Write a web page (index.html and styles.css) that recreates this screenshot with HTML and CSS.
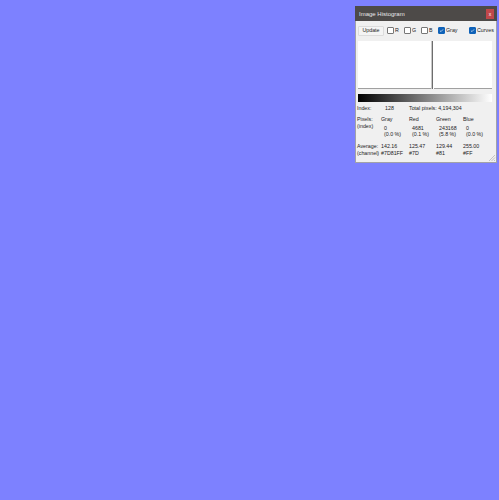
FILE: index.html

```html
<!DOCTYPE html>
<html>
<head>
    <meta charset="UTF-8">
    <title>Image Histogram</title>
    <link rel="stylesheet" href="styles.css">
</head>
<body>

    <div class="window">

        <div class="titlebar">
            <span class="title">Image Histogram</span>
            <span class="close">x</span>
        </div>

        <div class="toolbar">
            <button class="update">Update</button>
            <label class="check"><span class="box"></span>R</label>
            <label class="check"><span class="box"></span>G</label>
            <label class="check"><span class="box"></span>B</label>
            <label class="check"><span class="box on"><svg viewBox="0 0 8 8"><path d="M1.5 4.2 3.2 5.8 6.5 2.2" fill="none" stroke="#fff" stroke-width="1"/></svg></span>Gray</label>
            <label class="check curves"><span class="box on"><svg viewBox="0 0 8 8"><path d="M1.5 4.2 3.2 5.8 6.5 2.2" fill="none" stroke="#fff" stroke-width="1"/></svg></span>Curves</label>
        </div>

        <div class="plot">
            <div class="baseline left"></div>
            <div class="peak"></div>
            <div class="baseline right"></div>
        </div>

        <div class="gradient"></div>

        <div class="index-row">
            <span class="index-label">Index:</span>
            <span class="index-value">128</span>
            <span>Total pixels: 4,194,304</span>
        </div>

        <div class="stats pixels">
            <div class="head">Pixels:<br>(index)</div>
            <div>Gray<div class="val">0</div><div class="pct">(0.0 %)</div></div>
            <div>Red<div class="val">4681</div><div class="pct">(0.1 %)</div></div>
            <div>Green<div class="val">243168</div><div class="pct">(5.8 %)</div></div>
            <div>Blue<div class="val">0</div><div class="pct">(0.0 %)</div></div>
        </div>

        <div class="stats average">
            <div class="head">Average:<br>(channel)</div>
            <div>142.16<br>#7D81FF</div>
            <div>125.47<br>#7D</div>
            <div>129.44<br>#81</div>
            <div>255.00<br>#FF</div>
        </div>

        <svg class="grip" viewBox="0 0 8 8"><path d="M7 1 1 7M7 3.5 3.5 7M7 6 6 7" stroke="#c4c4c4" stroke-width="1" fill="none"/></svg>

    </div>

</body>
</html>
```

FILE: styles.css

```css
html {
    box-sizing: border-box;
}

*,
*:before,
*:after {
    box-sizing: inherit;
}

body {
    margin: 0;
    height: 500px;
    overflow: hidden;
    background: #7d81ff;
    font-family: "Liberation Sans", Arial, sans-serif;
    font-size: 5.3px;
    line-height: 7px;
    color: #222;
}

.window {
    position: absolute;
    left: 355px;
    top: 6px;
    width: 142px;
    height: 157px;
    background: #f0f0f0;
    border: 1px solid #a2a2a8;
    border-top: 0;
}

.titlebar {
    display: flex;
    align-items: flex-start;
    justify-content: space-between;
    height: 15px;
    margin: 0 -1px;
    padding-left: 4px;
    background: #4d4a48;
    color: #e8e8e8;
    font-size: 6px;
    line-height: 16px;
}

.close {
    width: 8px;
    height: 10px;
    margin: 3px 3px 0 0;
    background: #c0474a;
    color: #fff;
    font-size: 5px;
    line-height: 10px;
    text-align: center;
}

.toolbar {
    display: flex;
    align-items: center;
    height: 20px;
    padding: 0 0 1px 2px;
}

.update {
    flex: none;
    width: 26px;
    height: 10px;
    margin: 0 3px 0 0;
    padding: 0;
    background: #f4f4f4;
    border: 1px solid #dcdcdc;
    border-radius: 1px;
    font: inherit;
    color: #222;
}

.check {
    display: flex;
    flex: none;
    align-items: center;
    gap: 1px;
    width: 17px;
}

.box {
    display: block;
    flex: none;
    width: 7px;
    height: 7px;
    background: #fff;
    border: 1px solid #777;
    border-radius: 1px;
}

.box.on {
    background: #0f62b8;
    border-color: #0f62b8;
}

.box svg {
    display: block;
    width: 100%;
    height: 100%;
}

.check.curves {
    margin-left: 14px;
    width: auto;
}

.plot {
    position: relative;
    height: 48px;
    margin: 0 4px 0 2px;
    background: #fff;
}

.baseline {
    position: absolute;
    bottom: 0;
    height: 1px;
    background: #a0a0a0;
}

.baseline.left {
    left: 0;
    width: 73px;
}

.baseline.right {
    left: 76px;
    right: 0;
}

.peak {
    position: absolute;
    left: 74px;
    top: 0;
    bottom: 0;
    width: 1px;
    background: #6d6d6d;
    box-shadow: -1px 0 0 #c8c8c8;
}

.gradient {
    height: 8px;
    margin: 5px 4px 0 2px;
    background: linear-gradient(to right, #000, #fff);
}

.index-row {
    display: flex;
    margin: 3px 0 0 1px;
}

.index-label {
    width: 28px;
}

.index-value {
    width: 24px;
}

.stats {
    display: grid;
    grid-template-columns: 24px 28px 27px 27px 27px;
    margin-left: 1px;
}

.pixels {
    margin-top: 4px;
}

.average {
    margin-top: 5px;
}

.val {
    padding-left: 3px;
    margin-top: 2px;
    line-height: 6px;
}

.pct {
    padding-left: 3px;
    line-height: 7px;
}

.grip {
    position: absolute;
    right: 0;
    bottom: 0;
    width: 8px;
    height: 8px;
}
```
